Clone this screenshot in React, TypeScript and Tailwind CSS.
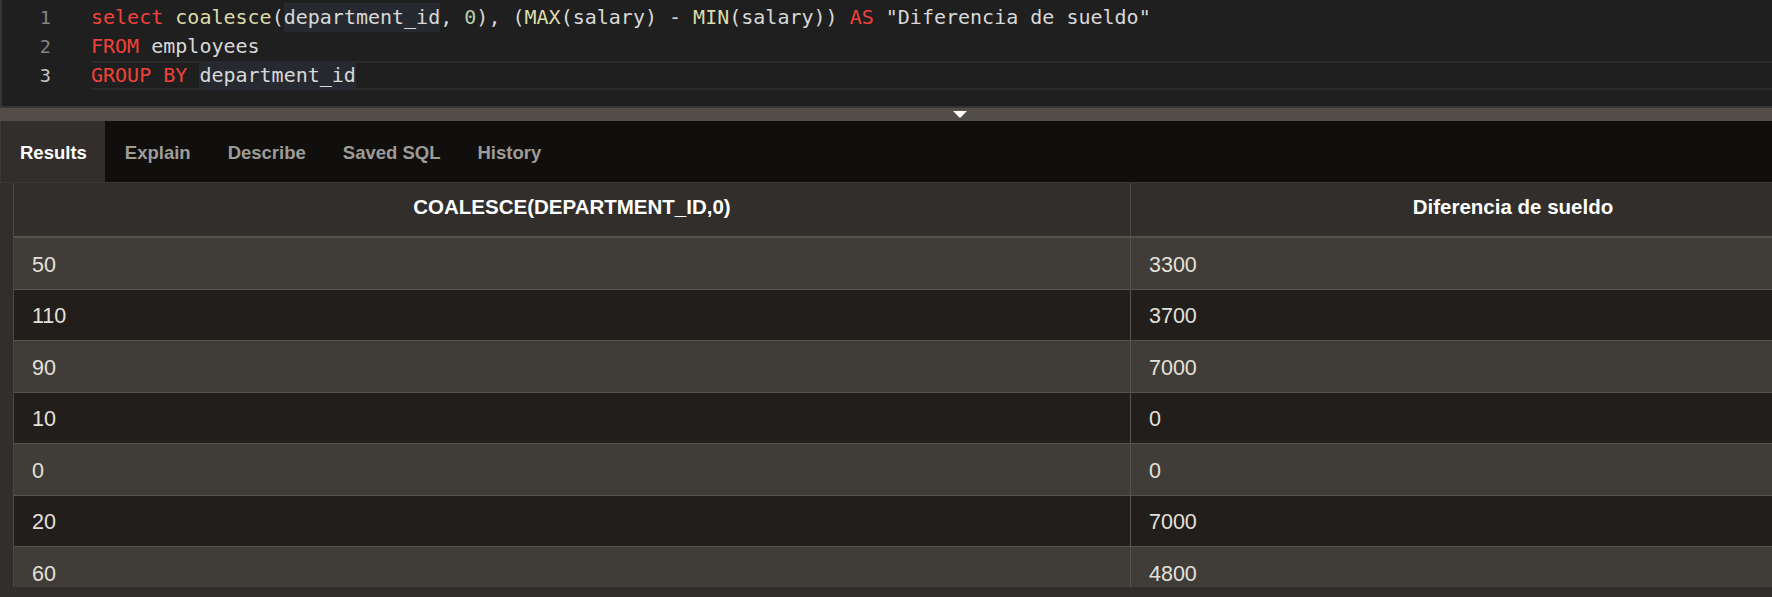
type Tok = [string, string?]

const code: Tok[][] = [
  [
    ['select', 'kw'], [' '], ['coalesce', 'fn'], ['('], ['department_id', 'hl'], [', '], ['0', 'num'],
    ['), ('], ['MAX', 'fn'], ['(salary) - '], ['MIN', 'fn'], ['(salary)) '], ['AS', 'kw'],
    [' "Diferencia de sueldo"'],
  ],
  [['FROM', 'kw'], [' employees']],
  [['GROUP BY', 'kw'], [' '], ['department_id', 'hl']],
]

const tokClass: Record<string, string> = {
  kw: 'text-[#f04239]',
  fn: 'text-[#dcdcaa]',
  num: 'text-[#b5cea8]',
  hl: 'inline-block bg-[#262a30]',
}

const rows = [
  ['50', '3300'],
  ['110', '3700'],
  ['90', '7000'],
  ['10', '0'],
  ['0', '0'],
  ['20', '7000'],
  ['60', '4800'],
]

const tabs = ['Results', 'Explain', 'Describe', 'Saved SQL', 'History']

const Editor = () => (
  <div className="h-[108px] shrink-0 bg-[#1f1f1f] border-l-2 border-b-2 border-[#363636] pt-[3px] font-['DejaVu_Sans_Mono',monospace] text-[20px] leading-[29px] whitespace-pre text-[#d8d8d8]">
    {code.map((line, i) => {
      const current = i === code.length - 1
      return (
        <div key={i} className="flex h-[29px]">
          <div className="w-[89px] shrink-0">
            <div className={`w-[49px] text-right text-[18.5px] ${current ? 'text-[#c6c6c6]' : 'text-[#858585]'}`}>
              {i + 1}
            </div>
          </div>
          <div
            className={`flex-1 ${current ? 'shadow-[inset_0_2px_0_#2a2a2a,inset_0_-2px_0_#2a2a2a]' : ''}`}
          >
            {line.map(([text, kind], j) => (
              <span key={j} className={kind ? tokClass[kind] : ''}>
                {text}
              </span>
            ))}
          </div>
        </div>
      )
    })}
  </div>
)

const Splitter = () => (
  <div className="h-[13px] shrink-0 bg-[#524d47] pl-[953px] flex items-center">
    <svg width="14" height="7" viewBox="0 0 14 7">
      <polygon points="0,0 14,0 7,7" fill="#ffffff" />
    </svg>
  </div>
)

const Tabs = () => (
  <div className="h-[62px] shrink-0 flex bg-[#100f0d] border-b border-[#3a3633] font-['Liberation_Sans',Arial,sans-serif] font-bold text-[18.5px]">
    {tabs.map((tab, i) => (
      <div
        key={tab}
        className={
          i === 0
            ? 'flex items-center pt-[2px] pl-[19px] pr-[18px] bg-[#312e2b] border-l border-[#3d3935] text-white'
            : 'flex items-center pt-[2px] pl-[20px] pr-[17px] text-[#9e9b97]'
        }
      >
        {tab}
      </div>
    ))}
  </div>
)

const ResultsGrid = () => (
  <div className="flex-1 min-h-0 flex flex-col bg-[#312e2b] font-['Liberation_Sans',Arial,sans-serif]">
    <div className="flex-1 min-h-0 overflow-hidden pl-[13px]">
      <div className="w-[1882px] h-full border-l border-[#4b4743]">
        <div className="flex h-[55px] bg-[#312e2b] border-b-2 border-[#57524c] text-white font-bold text-[20.5px]">
          <div className="w-[1117px] border-r border-[#4f4b47] flex items-center justify-center pb-[5px]">
            COALESCE(DEPARTMENT_ID,0)
          </div>
          <div className="w-[764px] flex items-center justify-center pb-[5px]">Diferencia de sueldo</div>
        </div>
        {rows.map(([dept, diff], i) => (
          <div
            key={i}
            className={`flex h-[51.5px] border-b border-[#57524c] text-[21.5px] text-[#e4e1dc] ${
              i % 2 === 0 ? 'bg-[#403c37]' : 'bg-[#221e1b]'
            }`}
          >
            <div className="w-[1117px] border-r border-[#57524c] flex items-center pl-[18px] pt-[3px]">{dept}</div>
            <div className="w-[764px] flex items-center pl-[18px] pt-[3px]">{diff}</div>
          </div>
        ))}
      </div>
    </div>
    <div className="h-[10px] shrink-0" />
  </div>
)

export default function App() {
  return (
    <div className="w-[1772px] h-[597px] overflow-hidden flex flex-col bg-[#100f0d]">
      <Editor />
      <Splitter />
      <Tabs />
      <ResultsGrid />
    </div>
  )
}
